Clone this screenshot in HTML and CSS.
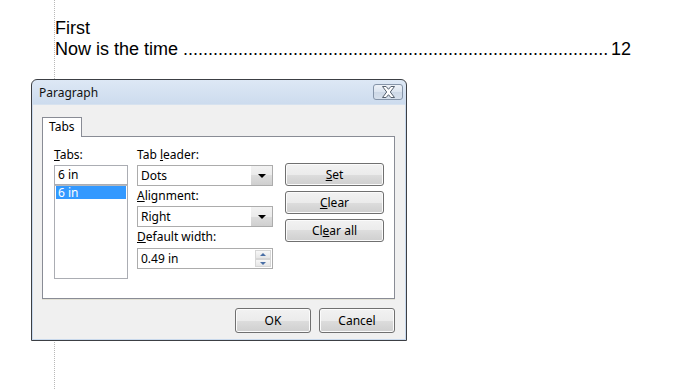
FILE: index.html
```html
<!DOCTYPE html>
<html lang="en">
<head>
    <meta charset="UTF-8">
    <title>Paragraph - Tabs</title>
    <link rel="stylesheet" href="styles.css">
</head>
<body>
    <div class="doc">
        <div class="doc-line">First</div>
        <div class="doc-line">
            <span>Now is the time</span>
            <span class="leader">.....................................................................................</span>
            <span class="page-num">12</span>
        </div>
    </div>

    <div class="dialog">
        <div class="titlebar">
            <span class="title">Paragraph</span>
            <button class="close-btn" aria-label="Close">
                <svg width="15" height="12" viewBox="0 0 15 12">
                    <path d="M1.5 0.5h3.6l2.4 2.8 2.4-2.8h3.6l-4.2 5.5 4.2 5.5h-3.6l-2.4-2.8-2.4 2.8h-3.6l4.2-5.5z" fill="#fff" stroke="#55606e" stroke-width="1" stroke-linejoin="round"/>
                </svg>
            </button>
        </div>

        <div class="client">
            <div class="tab-strip">
                <div class="tab">Tabs</div>
            </div>

            <div class="panel">
                <div class="col-list">
                    <div class="field-label"><u>T</u>abs:</div>
                    <div class="text-box">6 in</div>
                    <div class="list-box">
                        <div class="list-item selected">6 in</div>
                    </div>
                </div>

                <div class="col-fields">
                    <div class="field-label">Tab <u>l</u>eader:</div>
                    <div class="combo">
                        <span class="combo-value">Dots</span>
                        <span class="combo-arrow"></span>
                    </div>
                    <div class="field-label"><u>A</u>lignment:</div>
                    <div class="combo">
                        <span class="combo-value">Right</span>
                        <span class="combo-arrow"></span>
                    </div>
                    <div class="field-label"><u>D</u>efault width:</div>
                    <div class="spin">
                        <span class="combo-value">0.49 in</span>
                        <span class="spin-buttons">
                            <span class="spin-up"></span>
                            <span class="spin-down"></span>
                        </span>
                    </div>
                </div>

                <div class="col-buttons">
                    <button class="btn"><u>S</u>et</button>
                    <button class="btn"><u>C</u>lear</button>
                    <button class="btn">Cl<u>e</u>ar all</button>
                </div>
            </div>

            <div class="footer">
                <button class="btn btn-wide">OK</button>
                <button class="btn btn-wide">Cancel</button>
            </div>
        </div>
    </div>
</body>
</html>
```

FILE: styles.css
```css
* {
    margin: 0;
    padding: 0;
    box-sizing: border-box;
}

body {
    background: #fff;
    font-family: "Liberation Sans", Arial, sans-serif;
    color: #000;
}

/* document behind the dialog */
.doc {
    margin-left: 54px;
    border-left: 1px dotted #b8b8b8;
    min-height: 389px;
    padding-top: 18px;
}

.doc-line {
    width: 576px;
    font-size: 18px;
    display: flex;
    white-space: nowrap;
}

.leader {
    margin-left: 5px;
}

.page-num {
    margin-left: auto;
}

/* dialog window */
.dialog {
    position: absolute;
    left: 31px;
    top: 79px;
    width: 376px;
    height: 262px;
    border: 1px solid #3c3f44;
    border-radius: 6px 6px 0 0;
    background: linear-gradient(#dde8f5, #c9d9ec 30px, #c9d9ec);
    padding: 0 1px 1px;
    display: flex;
    flex-direction: column;
    font-family: "Noto Sans", sans-serif;
    font-size: 12px;
}

.titlebar {
    height: 24px;
    display: flex;
    align-items: center;
    padding-left: 6px;
}

.title {
    color: #111;
    font-size: 12px;
}

.close-btn {
    margin-left: auto;
    margin-right: 2px;
    width: 30px;
    height: 16px;
    border: 1px solid #8594a8;
    border-radius: 3px;
    background: linear-gradient(#eef2f8, #dbe4ef 50%, #cdd8e6 50%, #d6e0ec);
    display: flex;
    align-items: center;
    justify-content: center;
}

.close-btn svg {
    display: block;
}

.client {
    flex: 1;
    background: #f0f0f0;
    border-top: 1px solid #d7e2ef;
    padding: 12px 10px 0 9px;
}

.tab-strip {
    display: flex;
}

.tab {
    position: relative;
    z-index: 1;
    height: 20px;
    margin-bottom: -1px;
    padding: 0 6px;
    background: #fff;
    border: 1px solid #898c95;
    border-bottom: none;
    line-height: 18px;
}

.panel {
    height: 163px;
    background: #fff;
    border: 1px solid #898c95;
    box-shadow: 0 1px 0 #e2e1d6;
    display: flex;
    padding: 10px 0 0 11px;
}

.field-label {
    line-height: 16px;
    margin-top: 2px;
}

.field-label:first-child {
    margin-top: 0;
}

/* left column: tab stops */
.col-list {
    width: 74px;
}

.text-box {
    margin-top: 2px;
    height: 20px;
    border: 1px solid #abadb3;
    padding-left: 3px;
    line-height: 18px;
}

.list-box {
    height: 94px;
    border: 1px solid #abadb3;
    border-top-color: #b6b8bd;
    padding: 0 1px;
}

.list-item {
    height: 13px;
    line-height: 13px;
    padding-left: 2px;
}

.list-item.selected {
    background: #3399ff;
    color: #fff;
}

/* middle column: leader, alignment, width */
.col-fields {
    width: 136px;
    margin-left: 9px;
}

.combo,
.spin {
    margin-top: 2px;
    height: 21px;
    border: 1px solid #acacac;
    display: flex;
    align-items: stretch;
}

.spin {
    margin-top: 3px;
}

.combo-value {
    flex: 1;
    padding-left: 3px;
    line-height: 19px;
}

.combo-arrow {
    width: 21px;
    background: linear-gradient(#f2f2f2, #ebebeb 50%, #dddddd 50%, #cfcfcf);
    position: relative;
}

.combo-arrow::after {
    content: "";
    position: absolute;
    left: 7px;
    top: 8px;
    border-left: 4px solid transparent;
    border-right: 4px solid transparent;
    border-top: 4px solid #000;
}

.spin-buttons {
    width: 17px;
    display: flex;
    flex-direction: column;
    padding: 1px 1px 1px 0;
}

.spin-up,
.spin-down {
    flex: 1;
    position: relative;
    background: linear-gradient(#f7f7f7, #e6e6e6);
    border: 1px solid #d6d6d6;
}

.spin-up::after,
.spin-down::after {
    content: "";
    position: absolute;
    left: 4px;
    border-left: 3px solid transparent;
    border-right: 3px solid transparent;
}

.spin-up::after {
    top: 2px;
    border-bottom: 3px solid #4a6fa5;
}

.spin-down::after {
    top: 2px;
    border-top: 3px solid #4a6fa5;
}

/* right column: set / clear */
.col-buttons {
    width: 99px;
    margin-left: 12px;
    padding-top: 16px;
    display: flex;
    flex-direction: column;
    gap: 5px;
}

.btn {
    height: 23px;
    border: 1px solid #707070;
    border-radius: 3px;
    background: linear-gradient(#f2f2f2, #ebebeb 50%, #dddddd 50%, #cfcfcf);
    box-shadow: inset 0 0 0 1px #fbfbfb;
    font-family: "Noto Sans", sans-serif;
    font-size: 12px;
    color: #000;
}

.footer {
    display: flex;
    justify-content: flex-end;
    gap: 8px;
    padding-top: 9px;
}

.btn-wide {
    width: 76px;
    height: 25px;
}
```
